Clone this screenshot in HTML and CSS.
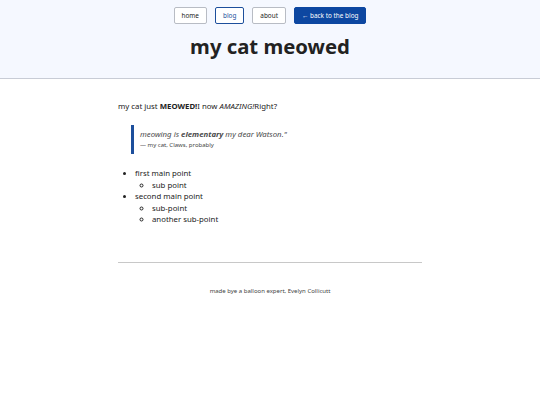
FILE: index.html
```html
<!DOCTYPE html>
<html>
<head>
<meta charset="utf-8">
<link rel="stylesheet" href="styles.css">
</head>
<body>
<header class="site-header">
  <nav class="nav">
    <a class="btn" href="#">home</a>
    <a class="btn btn-active" href="#">blog</a>
    <a class="btn" href="#">about</a>
    <a class="btn btn-primary" href="#">← back to the blog</a>
  </nav>
  <h1 class="title">my cat meowed</h1>
</header>
<main class="content">
  <p class="lead">my cat just <strong>MEOWED!</strong>I now <em>AMAZING!</em>Right?</p>
  <blockquote class="quote">
    <p class="quote-text">meowing is <strong>elementary</strong> my dear Watson."</p>
    <p class="quote-cite">— my cat, Claws, probably</p>
  </blockquote>
  <ul class="list">
    <li>first main point
      <ul class="sublist"><li>sub point</li></ul>
    </li>
    <li>second main point
      <ul class="sublist"><li>sub-point</li><li>another sub-point</li></ul>
    </li>
  </ul>
  <hr class="rule">
  <footer class="footer">made bye a balloon expert, Evelyn Collicutt</footer>
</main>
</body>
</html>
```
FILE: styles.css
```css
html, body {
  margin: 0;
  padding: 0;
  background: #ffffff;
  font-family: "Noto Sans", "Open Sans", sans-serif;
  color: #222222;
}
.site-header {
  background: #f5f8ff;
  border-bottom: 1px solid #c8ccd6;
  padding-top: 7px;
  height: 71px;
  box-sizing: content-box;
}
.nav {
  display: flex;
  justify-content: center;
  gap: 8px;
}
.btn {
  display: block;
  font-size: 6.4px;
  line-height: 15px;
  padding: 0 7px;
  border: 1px solid #b8bcc4;
  border-radius: 2px;
  background: #ffffff;
  color: #222222;
  text-decoration: none;
}
.btn-active {
  border-color: #1d4f9c;
  color: #1d4f9c;
}
.btn-primary {
  background: #0d47a1;
  border-color: #0d47a1;
  color: #ffffff;
}
.title {
  margin: 7px 0 0;
  text-align: center;
  font-size: 20.3px;
  line-height: 30px;
  font-weight: 700;
  color: #222222;
}
.content {
  width: 304px;
  margin: 0 auto;
  padding-top: 20px;
}
.lead {
  margin: 0;
  font-size: 7.8px;
  line-height: 14px;
}
.quote {
  margin: 12px 0 0 13px;
  border-left: 3px solid #1d4f9c;
  padding: 3px 0 4px 6px;
}
.quote-text {
  margin: 0;
  font-size: 7.8px;
  line-height: 12px;
  font-style: italic;
  color: #4a4a4a;
}
.quote-cite {
  margin: 0;
  font-size: 6px;
  line-height: 10px;
  color: #444444;
}
.list {
  margin: 14px 0 0;
  padding-left: 17px;
  font-size: 7.8px;
  line-height: 11.6px;
}
.sublist {
  margin: 0;
  padding-left: 17px;
  list-style-type: circle;
}
.rule {
  margin: 36px 0 0;
  border: 0;
  border-top: 1px solid #c8c8c8;
}
.footer {
  margin-top: 24px;
  text-align: center;
  font-size: 6px;
  color: #444444;
}
```
